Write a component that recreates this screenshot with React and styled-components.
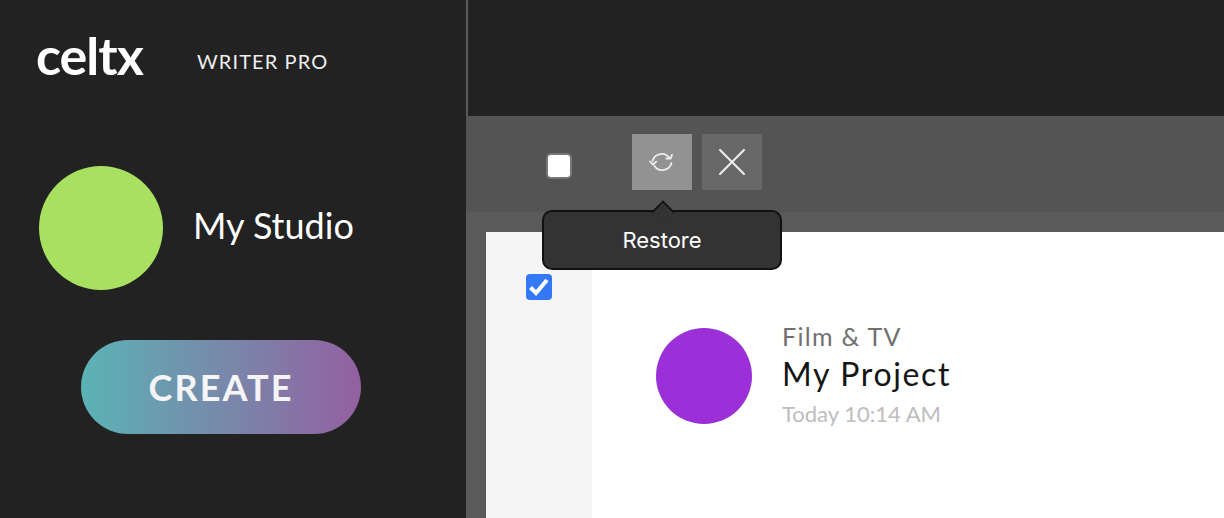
import React from "react";
import styled, { createGlobalStyle } from "styled-components";

const Global = createGlobalStyle`
  html, body { margin: 0; padding: 0; background: #222; }
  body { font-family: "Lato", "Liberation Sans", sans-serif; overflow: hidden; }
  * { box-sizing: border-box; }
`;
const Page = styled.div`display: flex; width: 1224px; height: 518px; overflow: hidden;`;
const Sidebar = styled.aside`width: 466px; flex: none; background: #222; display: flex; flex-direction: column; align-items: flex-start;`;
const Brand = styled.div`display: flex; align-items: flex-start; height: 116px; padding: 24px 0 0 36px;`;
const Logo = styled.span`font-size: 52px; line-height: 62px; font-weight: 700; color: #fff; letter-spacing: -1px; width: 161px;`;
const Edition = styled.span`font-size: 20px; line-height: 24px; margin-top: 25px; font-weight: 400; color: #eee; letter-spacing: 1.1px;`;
const Studio = styled.div`display: flex; align-items: center; gap: 30px; margin: 50px 0 0 39px;`;
const StudioDot = styled.div`width: 124px; height: 124px; border-radius: 50%; background: #a8e060;`;
const StudioName = styled.div`font-size: 36px; line-height: 44px; margin-bottom: 6px; color: #fff; font-weight: 400;`;
const Create = styled.button`
  margin: 50px 0 0 81px; width: 280px; height: 94px; border: 0; border-radius: 47px;
  background: linear-gradient(90deg, #5bb3b5, #9360a0); color: #f5f5f7;
  font-family: inherit; font-size: 36px; font-weight: 700; letter-spacing: 2.1px;
`;
const Main = styled.main`flex: 1; display: flex; flex-direction: column; background: #5a5a5a; position: relative;`;
const TopBar = styled.div`height: 116px; background: #222; border-left: 2px solid #5a5a5a;`;
const Toolbar = styled.div`height: 96px; background: #545454; display: flex; align-items: flex-start; padding: 18px 0 0 166px; gap: 10px;`;
const IconButton = styled.button`
  width: 60px; height: 56px; border: 0; padding: 0; display: flex; align-items: center; justify-content: center;
  background: ${p => (p.$active ? "#929292" : "#686868")};
`;
const Box = styled.span`
  position: absolute; left: 80px; top: 153px; width: 26px; height: 26px; border-radius: 5px;
  background: #fff; border: 2px solid #777;
`;
const Tooltip = styled.div`
  position: absolute; left: 76px; top: 210px; width: 240px; height: 60px; z-index: 2;
  background: #333; border: 2px solid #111; border-radius: 10px; color: #fff;
  font-family: "Inter", sans-serif; font-size: 22px; display: flex; align-items: center; justify-content: center;
  &::before {
    content: ""; position: absolute; left: 109px; top: -10px; width: 18px; height: 18px;
    background: #333; border-left: 2px solid #111; border-top: 2px solid #111; transform: rotate(45deg) scale(.82);
  }
`;
const Content = styled.div`flex: 1; margin: 20px 0 0 20px; display: flex; background: #fff;`;
const Gutter = styled.div`width: 106px; background: #f5f5f5; padding: 42px 0 0 40px;`;
const Check = styled.span`width: 26px; height: 26px; border-radius: 4px; background: #3478f6; display: flex; align-items: center; justify-content: center;`;
const Project = styled.div`display: flex; align-items: center; gap: 30px; padding: 89px 0 0 64px; height: fit-content;`;
const ProjectDot = styled.div`width: 96px; height: 96px; border-radius: 50%; background: #9b2fd8;`;
const Meta = styled.div`display: flex; flex-direction: column;`;
const Category = styled.div`font-size: 25px; line-height: 30px; color: #707070; letter-spacing: 1.3px;`;
const Title = styled.div`font-size: 32px; line-height: 46px; color: #151515; letter-spacing: 1.65px;`;
const Stamp = styled.div`font-size: 22px; line-height: 34px; color: #bdbdbd;`;

export default function App() {
  return (
    <Page>
      <Global />
      <Sidebar>
        <Brand><Logo>celtx</Logo><Edition>WRITER PRO</Edition></Brand>
        <Studio><StudioDot /><StudioName>My Studio</StudioName></Studio>
        <Create>CREATE</Create>
      </Sidebar>
      <Main>
        <TopBar />
        <Toolbar>
          <IconButton $active aria-label="Restore">
            <svg width="26" height="24" viewBox="0 0 26 24" fill="none" stroke="#eee" strokeWidth="1.8" strokeLinecap="round" strokeLinejoin="round">
              <path d="M3.5 11A9.5 9.5 0 0 1 20.5 8" />
              <path d="M17.5 8.5h4.2l1.3-3.6" transform="translate(0 0)" />
              <path d="M22.5 13A9.5 9.5 0 0 1 5.5 16" />
              <path d="M1 11.5l3 3.2 3.2-3" />
            </svg>
          </IconButton>
          <IconButton aria-label="Close">
            <svg width="28" height="28" viewBox="0 0 28 28" fill="none" stroke="#eee" strokeWidth="2" strokeLinecap="round">
              <path d="M2 2l24 24M26 2L2 26" />
            </svg>
          </IconButton>
        </Toolbar>
        <Box />
        <Tooltip>Restore</Tooltip>
        <Content>
          <Gutter>
            <Check>
              <svg width="22" height="20" viewBox="0 0 22 20" fill="none" stroke="#fff" strokeWidth="4">
                <path d="M2.5 10.5l5.5 5.5L19 3" />
              </svg>
            </Check>
          </Gutter>
          <Project>
            <ProjectDot />
            <Meta>
              <Category>Film &amp; TV</Category>
              <Title>My Project</Title>
              <Stamp>Today 10:14 AM</Stamp>
            </Meta>
          </Project>
        </Content>
      </Main>
    </Page>
  );
}
